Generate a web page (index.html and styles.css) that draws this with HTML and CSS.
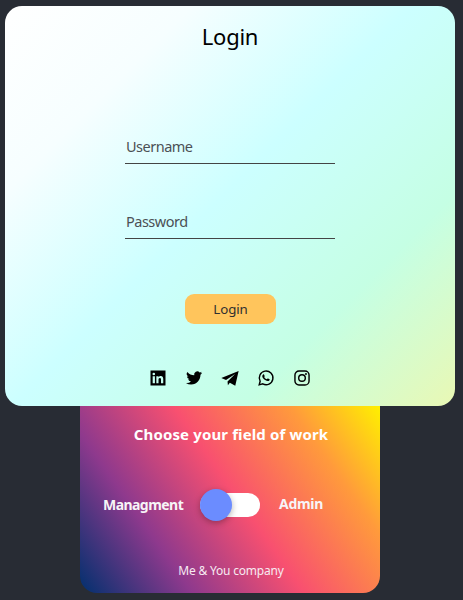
FILE: index.html
```html
<!DOCTYPE html>
<html lang="en">
<head>
<meta charset="utf-8">
<title>Login</title>
<link rel="stylesheet" href="styles.css">
</head>
<body>
<main class="login">
  <h1 class="title">Login</h1>
  <form class="form">
    <input class="field" type="text" placeholder="Username" aria-label="Username">
    <input class="field password" type="password" placeholder="Password" aria-label="Password">
    <button class="submit" type="button">Login</button>
  </form>
  <nav class="social">
    <svg viewBox="0 0 24 24"><path fill-rule="evenodd" d="M2 2h20v20H2zM4.9 9.7v9.2h3V9.7zM6.4 4.9a1.7 1.7 0 1 0 0 3.4 1.7 1.7 0 0 0 0-3.4zM9.8 9.7v9.2h2.9v-4.6c0-1.2.3-2.3 1.8-2.3s1.5 1.3 1.5 2.4v4.5h3v-5.1c0-2.5-.6-4.4-3.4-4.4-1.5 0-2.3.8-2.8 1.6h-.1V9.7z"/></svg>
    <svg viewBox="0 0 24 24"><path d="M22.66 5.16c-.76.33-1.58.56-2.4.66a4.2 4.2 0 0 0 1.84-2.32c-.8.48-1.7.82-2.65 1a4.18 4.18 0 0 0-7.13 3.82A11.87 11.87 0 0 1 3.2 4.05a4.18 4.18 0 0 0 1.3 5.98 4.1 4.1 0 0 1-1.9-.52v.05a4.18 4.18 0 0 0 3.35 4.1 4.2 4.2 0 0 1-1.88.07 4.18 4.18 0 0 0 3.9 2.9A8.4 8.4 0 0 1 1.3 18.57 11.8 11.8 0 0 0 8.2 20.75c7.69 0 12.4-6.87 12.4-12.4v-.54c.81-.6 1.5-1.32 2.06-2.65z"/></svg>
    <svg viewBox="0 0 24 24"><path d="M23.5 2.5 19 22.2 11.8 18.2 9.2 21.6 8.7 16.5 18.8 6.8 6.7 14.5 .4 12z"/></svg>
    <svg viewBox="0 0 24 24"><path fill="none" stroke="#000" stroke-width="1.9" d="M2.9 21.1l1.3-4.8a9.1 9.1 0 1 1 3.5 3.5z"/><path d="M8.3 7.2c.4-.3.9-.2 1.1.2l.8 1.8c.1.3 0 .6-.7 1.4.8 1.5 2 2.5 3.6 3.2l1-1.1c.2-.3.5-.2.7-.1l1.9.9c.5.3.1 1.4-.4 1.9-1.1 1.1-3 .9-5.5-.6-2-1.3-3.8-3.3-3.8-5.2 0-1.1.7-2 1.3-2.4z"/></svg>
    <svg viewBox="0 0 24 24"><g fill="none" stroke="#000" stroke-width="1.9"><rect x="2.6" y="2.6" width="18.8" height="18.8" rx="5.4"/><circle cx="12" cy="12" r="4.4"/></g><circle cx="17.3" cy="6.7" r="1.3"/></svg>
  </nav>
</main>
<section class="work">
  <h2 class="question">Choose your field of work</h2>
  <div class="choice">
    <span class="management">Managment</span>
    <span class="toggle"><span class="knob"></span></span>
    <span class="admin">Admin</span>
  </div>
  <p class="company">Me &amp; You company</p>
</section>
</body>
</html>
```

FILE: styles.css
```css
* { box-sizing: border-box; }

body {
  height: 600px;
  margin: 0;
  padding: 6px 8px 7px 5px;
  overflow: hidden;
  background: #282c34;
  font-family: "Segoe UI", "Noto Sans", sans-serif;
}

.login {
  display: flex;
  flex-direction: column;
  align-items: center;
  width: 450px;
  height: 400px;
  padding-top: 14px;
  border-radius: 17px;
  background: linear-gradient(135deg, #fff, #f6feff 22%, #ccffff 48%, #c5ffe4 75%, #e9f8b4);
}

.title {
  margin: 0;
  font-size: 22px;
  font-weight: 400;
  letter-spacing: -.25px;
  line-height: 32px;
}

.form {
  display: flex;
  flex-direction: column;
  align-items: center;
  padding-top: 79px;
}

.field {
  width: 210px;
  height: 33px;
  padding: 0 1px 2px;
  border: 0;
  border-bottom: 1px solid #444;
  background: none;
  font: 14.5px "Segoe UI", "Noto Sans", sans-serif;
  letter-spacing: -.5px;
}

.field::placeholder { color: #4c5055; }

.password { margin-top: 42px; }

.submit {
  width: 91px;
  height: 30px;
  margin: 55px 0 0 1px;
  padding: 0;
  border: 0;
  border-radius: 9px;
  background: #ffc55c;
  color: #303030;
  font: 13.3px "Segoe UI", "Noto Sans", sans-serif;
  letter-spacing: -.1px;
}

.social {
  display: flex;
  gap: 18px;
  margin-top: 45px;
}

.social svg {
  width: 18px;
  height: 18px;
}

.work {
  display: flex;
  flex-direction: column;
  align-items: center;
  width: 300px;
  height: 187px;
  margin-left: 75px;
  padding-top: 17px;
  border-radius: 0 0 17px 17px;
  background: linear-gradient(55deg, #00306e, #8e398d 26%, #f85070 52%, #ff9a3c 79%, #fff000);
  color: #fff;
}

.question {
  margin: 0 0 0 2px;
  font-size: 15px;
  letter-spacing: .13px;
  line-height: 22px;
}

.choice {
  display: flex;
  align-items: center;
  width: 100%;
  height: 32px;
  margin-top: 44px;
  padding-left: 23px;
  font-size: 14px;
  font-weight: 700;
  line-height: 20px;
  color: #f7f4f7;
}

.management {
  width: 97px;
  letter-spacing: -.55px;
}

.toggle {
  display: flex;
  align-items: center;
  width: 60px;
  height: 24px;
  border-radius: 12px;
  background: #fff;
}

.knob {
  width: 32px;
  height: 32px;
  flex: none;
  border-radius: 50%;
  background: #6b8cff;
  box-shadow: 0 2px 6px rgba(0, 0, 0, .3);
}

.admin {
  margin: -2px 0 0 19px;
  letter-spacing: -.3px;
}

.company {
  margin: 41px 0 0 2px;
  font-size: 12px;
  letter-spacing: -.2px;
  line-height: 18px;
  color: #f7eaf2;
}
```
